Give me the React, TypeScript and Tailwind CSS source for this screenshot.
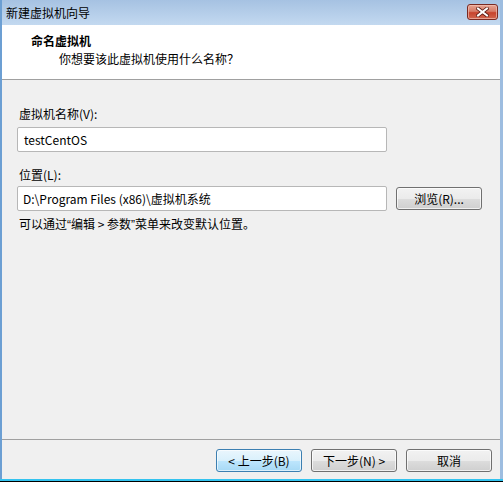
const font = "font-['Segoe_UI','Noto_Sans_CJK_SC','Liberation_Sans',sans-serif]";

function WinButton({ label, primary }: { label: string; primary?: boolean }) {
  return (
    <button
      type="button"
      className={
        "w-[86px] h-[23px] rounded-[3px] border text-[12px] leading-none text-black " +
        (primary
          ? "border-[#3c7fb1] bg-[linear-gradient(#eaf6fd_0%,#d9f0fc_50%,#bee6fd_51%,#a7d9f5_100%)] shadow-[inset_0_0_0_1px_#ffffff99]"
          : "border-[#707070] bg-[linear-gradient(#f2f2f2_0%,#ebebeb_50%,#dddddd_51%,#cfcfcf_100%)] shadow-[inset_0_0_0_1px_#ffffffb0]")
      }
    >
      {label}
    </button>
  );
}

export default function App() {
  const q = "font-['Liberation_Sans',sans-serif]";
  return (
    <div className={"w-[503px] h-[482px] flex flex-col bg-[#f0f0f0] text-[12px] text-black overflow-hidden " + font}>
      <div className="flex-1 flex flex-col border-l-2 border-r-[3px] border-l-[#6c9fd3] border-r-[#9dbde0]">
        {/* title bar */}
        <div className="h-[25px] flex items-center justify-between pl-[4px] pr-[2px] bg-[linear-gradient(#a6c2e2,#c3d9f0)]">
          <span className="text-[12px] text-black">新建虚拟机向导</span>
          <div className="w-[31px] h-[16px] mt-[-1px] rounded-[3px] border border-[#7a2a22] bg-[linear-gradient(#e8a493_0%,#d57c68_45%,#c7432d_55%,#d0674f_100%)] flex items-center justify-center shadow-[inset_0_0_0_1px_#f3c2b5aa]">
            <svg width="13" height="10" viewBox="0 0 13 10">
              <path d="M2 1.5 L11 8.5 M11 1.5 L2 8.5" stroke="#5a1a12" strokeWidth="3.6" strokeLinecap="square" />
              <path d="M2 1.5 L11 8.5 M11 1.5 L2 8.5" stroke="#ffffff" strokeWidth="2" strokeLinecap="square" />
            </svg>
          </div>
        </div>

        {/* header */}
        <div className="h-[55px] bg-white border-b border-[#a0a0a0] flex flex-col pt-[7px]">
          <div className="pl-[29px] font-bold text-[12px] leading-[18px]">命名虚拟机</div>
          <div className="pl-[57px] text-[12px] leading-[18px]">你想要该此虚拟机使用什么名称？</div>
        </div>

        {/* body */}
        <div className="flex-1 flex flex-col pl-[15px] pt-[26px]">
          <div className="pl-[2px] leading-[16px]">虚拟机名称(V):</div>
          <div className="mt-[5px] w-[370px] h-[25px] bg-white border border-[#b7b7b7] rounded-[2px] flex items-center pl-[6px]">
            testCentOS
          </div>

          <div className="mt-[15px] pl-[2px] leading-[16px]">位置(L):</div>
          <div className="mt-[3px] flex items-center gap-[9px]">
            <div className="w-[370px] h-[25px] bg-white border border-[#b7b7b7] rounded-[2px] flex items-center pl-[5px]">
              D:\Program Files (x86)\虚拟机系统
            </div>
            <WinButton label="浏览(R)..." />
          </div>
          <div className="mt-[5px] pl-[2px] leading-[16px]">
            可以通过<span className={q}>“</span>编辑 &gt; 参数<span className={q}>”</span>菜单来改变默认位置。
          </div>
        </div>

        {/* footer */}
        <div className="h-[40px] border-t border-[#a0a0a0] flex justify-end items-start gap-[9px] pt-[9px] pr-[8px]">
          <WinButton label="< 上一步(B)" primary />
          <WinButton label="下一步(N) >" />
          <WinButton label="取消" />
        </div>
      </div>
      <div className="h-[2px] bg-[#33c3ef]" />
      <div className="h-[1px] bg-black" />
    </div>
  );
}
